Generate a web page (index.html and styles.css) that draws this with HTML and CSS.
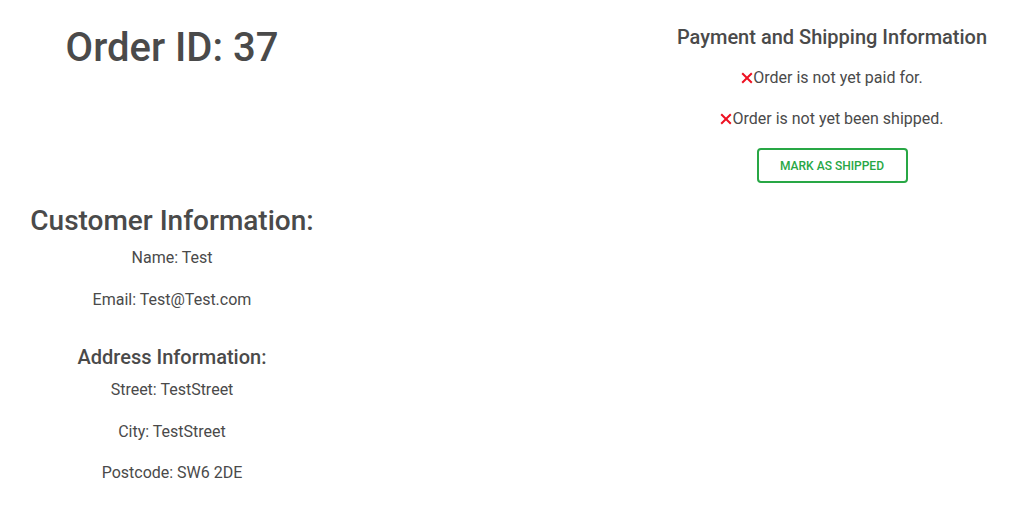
FILE: index.html
```html
<!DOCTYPE html>
<html>
<head>
<meta charset="utf-8">
<link rel="stylesheet" href="styles.css">
</head>
<body>
<div class="page">
  <div class="left">
    <h1 class="order-id">Order ID: 37</h1>
    <h2 class="section-title">Customer Information:</h2>
    <p>Name: Test</p>
    <p>Email: Test@Test.com</p>
    <h3 class="sub-title">Address Information:</h3>
    <p>Street: TestStreet</p>
    <p>City: TestStreet</p>
    <p>Postcode: SW6 2DE</p>
  </div>
  <div class="right">
    <h3 class="pay-title">Payment and Shipping Information</h3>
    <p class="status"><svg class="cross" viewBox="0 0 12 12" width="12" height="12"><path d="M1.2 1.2 L10.8 10.8 M10.8 1.2 L1.2 10.8" stroke="#ee1122" stroke-width="2" fill="none"/></svg>Order is not yet paid for.</p>
    <p class="status"><svg class="cross" viewBox="0 0 12 12" width="12" height="12"><path d="M1.2 1.2 L10.8 10.8 M10.8 1.2 L1.2 10.8" stroke="#ee1122" stroke-width="2" fill="none"/></svg>Order is not yet been shipped.</p>
    <button class="ship-btn">MARK AS SHIPPED</button>
  </div>
</div>
</body>
</html>
```

FILE: styles.css
```css
html, body {
  margin: 0;
  padding: 0;
  background: #fff;
}
body {
  font-family: Roboto, "Liberation Sans", sans-serif;
  color: #4a4a4a;
  font-size: 16px;
}
.page {
  display: flex;
  justify-content: space-between;
  align-items: flex-start;
}
.left {
  width: 344px;
  text-align: center;
}
.right {
  width: 358px;
  text-align: center;
  display: flex;
  flex-direction: column;
  align-items: center;
}
p {
  margin: 16px 0;
  line-height: 25.6px;
}
.order-id {
  font-size: 40px;
  font-weight: 500;
  line-height: 48px;
  margin: 24px 0 132px;
}
.section-title {
  font-size: 28px;
  font-weight: 500;
  line-height: 34px;
  margin: 0;
}
.section-title + p {
  margin-top: 7px;
}
.sub-title {
  font-size: 20px;
  font-weight: 500;
  line-height: 24px;
  margin: 33px 0 0;
}
.sub-title + p {
  margin-top: 8px;
}
.pay-title {
  font-size: 20px;
  font-weight: 500;
  line-height: 24px;
  margin: 25px 0 16px;
}
.cross {
  display: inline-block;
  vertical-align: -1px;
}
.right .status {
  margin: 0 0 15px;
}
.ship-btn {
  margin-top: 2px;
  width: 151px;
  height: 35px;
  border: 2px solid #28a745;
  border-radius: 4px;
  background: #fff;
  color: #28a745;
  font-family: Roboto, "Liberation Sans", sans-serif;
  font-size: 12px;
  font-weight: 500;
  padding: 0;
}
```
